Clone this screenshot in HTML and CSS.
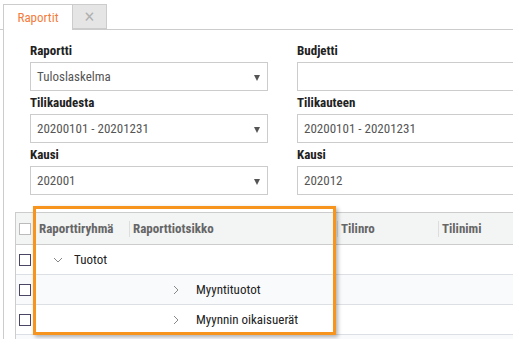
FILE: index.html
```html
<!DOCTYPE html>
<html lang="fi">
<head>
  <meta charset="UTF-8">
  <title>Raportit</title>
  <link rel="stylesheet" href="styles.css">
</head>
<body>

  <div class="tabs">
    <div class="tab active">Raportit</div>
    <div class="tab close">&#x2715;</div>
  </div>

  <div class="content">
    <div class="form">
      <div class="field">
        <label>Raportti</label>
        <div class="select">Tuloslaskelma<span class="arrow"></span></div>
      </div>
      <div class="field">
        <label>Budjetti</label>
        <div class="select"></div>
      </div>
      <div class="field">
        <label>Tilikaudesta</label>
        <div class="select">20200101 - 20201231<span class="arrow"></span></div>
      </div>
      <div class="field">
        <label>Tilikauteen</label>
        <div class="select">20200101 - 20201231</div>
      </div>
      <div class="field">
        <label>Kausi</label>
        <div class="select">202001<span class="arrow"></span></div>
      </div>
      <div class="field">
        <label>Kausi</label>
        <div class="select">202012</div>
      </div>
    </div>

    <div class="grid">
      <div class="row head">
        <div class="cell check"><span class="box light"></span></div>
        <div class="cell c1">Raporttiryhmä</div>
        <div class="cell c2"><span class="sep"></span>Raporttiotsikko</div>
        <div class="cell c3"><span class="sep"></span>Tilinro</div>
        <div class="cell c4"><span class="sep"></span>Tilinimi</div>
      </div>
      <div class="row">
        <div class="cell check"><span class="box"></span></div>
        <div class="cell group">
          <svg class="chev down" width="10" height="6" viewBox="0 0 10 6"><polyline points="1,1 5,5 9,1" fill="none" stroke="#888" stroke-width="1"/></svg>
          Tuotot
        </div>
      </div>
      <div class="row alt">
        <div class="cell check"><span class="box"></span></div>
        <div class="cell item">
          <svg class="chev" width="6" height="10" viewBox="0 0 6 10"><polyline points="1,1 5,5 1,9" fill="none" stroke="#888" stroke-width="1"/></svg>
          Myyntituotot
        </div>
      </div>
      <div class="row">
        <div class="cell check"><span class="box"></span></div>
        <div class="cell item">
          <svg class="chev" width="6" height="10" viewBox="0 0 6 10"><polyline points="1,1 5,5 1,9" fill="none" stroke="#888" stroke-width="1"/></svg>
          Myynnin oikaisuerät
        </div>
      </div>
      <div class="row alt">
        <div class="cell check"><span class="box"></span></div>
      </div>

      <div class="highlight"></div>
    </div>
  </div>

</body>
</html>
```

FILE: styles.css
```css
* {
  margin: 0;
  padding: 0;
  box-sizing: border-box;
}

body {
  font-family: "Roboto Condensed", "Liberation Sans Narrow", "DejaVu Sans Condensed", Roboto, sans-serif;
  font-size: 13px;
  color: #333;
  background: #fff;
  overflow: hidden;
  width: 513px;
  height: 339px;
}

.tabs {
  display: flex;
  padding: 4px 0 0 3px;
  border-bottom: 1px solid #ccc;
  height: 30px;
}

.tab {
  height: 26px;
  line-height: 25px;
  text-align: center;
  border: 1px solid #ccc;
  border-bottom: none;
}

.tab.active {
  width: 69px;
  color: #f47c3c;
  background: #fff;
  margin-bottom: -1px;
  height: 26px;
  border-right: none;
}

.tab.close {
  width: 35px;
  height: 25px;
  background: #e5e5e5;
  color: #b0b0b0;
  font-size: 15px;
  border-bottom: 1px solid #ccc;
}

.content {
  margin-left: 3px;
  border-left: 1px solid #ccc;
  padding: 13px 0 0 11px;
  height: 309px;
  overflow: hidden;
  position: relative;
}

.form {
  display: grid;
  grid-template-columns: 238px 238px;
  column-gap: 29px;
  row-gap: 4px;
  margin-left: 15px;
}

.field label {
  display: block;
  font-weight: bold;
  color: #222;
  line-height: 16px;
  margin-bottom: 3px;
}

.select {
  position: relative;
  height: 29px;
  line-height: 27px;
  border: 1px solid #ccc;
  padding-left: 6px;
  color: #555;
}

.arrow {
  position: absolute;
  right: 7px;
  top: 12px;
  border-left: 3px solid transparent;
  border-right: 3px solid transparent;
  border-top: 6px solid #555;
}

.grid {
  position: relative;
  margin-top: 17px;
  border-left: 1px solid #ccc;
}

.row {
  display: flex;
  height: 30px;
  border-bottom: 1px solid #dcdfe3;
  align-items: center;
}

.row.alt {
  background: #f9fafc;
}

.row.head {
  height: 33px;
  background: #f3f4f4;
  border-top: 1px solid #ccc;
  border-bottom: 1px solid #ccc;
  font-weight: bold;
  color: #666;
}

.cell {
  position: relative;
  height: 100%;
  display: flex;
  align-items: center;
}

.check {
  width: 18px;
  padding-left: 3px;
}

.box {
  width: 12px;
  height: 12px;
  border: 1px solid #4b4565;
  background: #fff;
}

.box.light {
  border-color: #bbb;
}

.c1 { width: 95px; padding-left: 5px; }
.c2 { width: 208px; padding-left: 4px; }
.c3 { width: 101px; padding-left: 4px; }
.c4 { flex: 1; padding-left: 4px; }

.sep {
  position: absolute;
  left: 0;
  top: 8px;
  height: 16px;
  border-left: 1px solid #ddd;
}

.group {
  padding-left: 19px;
  color: #222;
}

.group .chev {
  margin-right: 11px;
}

.item {
  padding-left: 139px;
  color: #222;
}

.item .chev {
  margin-right: 17px;
}

.highlight {
  position: absolute;
  left: 17px;
  top: -6px;
  width: 303px;
  height: 129px;
  border: 3px solid #f7941e;
  box-shadow: 2px 2px 4px rgba(0, 0, 0, 0.3);
  pointer-events: none;
}
```
